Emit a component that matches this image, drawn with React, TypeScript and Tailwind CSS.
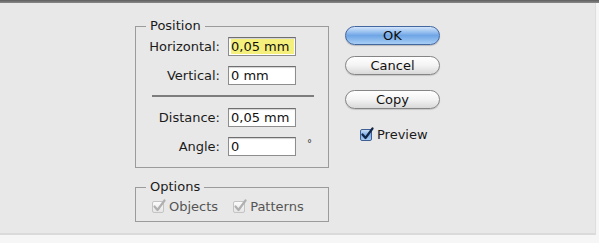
const font = { fontFamily: '"DejaVu Sans", "Liberation Sans", sans-serif' }

function Field({ label, value, highlight = false, suffix }: { label: string; value: string; highlight?: boolean; suffix?: string }) {
  return (
    <div className="flex items-center h-[19px]">
      <div className="w-[85px] text-right pr-[1px] text-[13px] text-[#1b1b1b]">{label}</div>
      <div className="ml-[7px] w-[68px] h-[19px] bg-white border border-[#8d8d8d] border-t-[#6f6f6f] shadow-[inset_0_1px_1px_rgba(0,0,0,0.18)] flex items-center pl-[2px]">
        <span className={highlight ? "bg-[#f5f07c] h-[15px] leading-[15px] pr-[5px] text-[13px] text-[#111]" : "text-[13px] leading-[15px] text-[#111]"}>
          {value}
        </span>
      </div>
      {suffix && <span className="ml-[11px] -mt-[6px] text-[10px] text-[#333]">{suffix}</span>}
    </div>
  )
}

function Check({ disabled = false }: { disabled?: boolean }) {
  return (
    <span
      className={
        disabled
          ? "relative w-[12px] h-[12px] border border-[#c4c4c4] bg-gradient-to-b from-[#fbfbfb] to-[#e6e6e6] rounded-[2px]"
          : "relative w-[12px] h-[12px] border border-[#3d5f94] bg-gradient-to-b from-[#c9dcf4] via-[#7eaee6] to-[#a9cbf2] rounded-[2px]"
      }
    >
      <svg viewBox="0 0 14 14" className="absolute -left-[1px] -top-[3px] w-[14px] h-[14px]">
        <path
          d="M2.5 7.5 L5.5 11 L12.5 1.5"
          fill="none"
          stroke={disabled ? "#b0b0b0" : "#12264a"}
          strokeWidth="2.2"
          strokeLinecap="round"
          strokeLinejoin="round"
        />
      </svg>
    </span>
  )
}

function AquaButton({ label, primary = false }: { label: string; primary?: boolean }) {
  return (
    <div
      className={
        primary
          ? "w-[95px] h-[19px] rounded-full border border-[#42669f] bg-gradient-to-b from-[#d3e5fa] via-[#6fa6e6] to-[#a7cdf5] flex items-center justify-center text-[13px] text-[#0d0d0d] shadow-[0_1px_1px_rgba(0,0,0,0.2)]"
          : "w-[95px] h-[19px] rounded-full border border-[#858585] bg-gradient-to-b from-[#ffffff] via-[#f3f3f3] to-[#d9d9d9] flex items-center justify-center text-[13px] text-[#111] shadow-[0_1px_1px_rgba(0,0,0,0.15)]"
      }
    >
      {label}
    </div>
  )
}

export default function App() {
  return (
    <div className="w-[599px] h-[243px] bg-[#f6f6f6] flex flex-col" style={font}>
      <div className="h-[3px] bg-gradient-to-b from-[#5e5e5e] to-[#8a8a8a]" />
      <div className="w-[596px] h-[232px] bg-[#e8e8e8] border-b-2 border-b-[#dadada] border-r border-r-[#dedede] flex pt-[15px] pl-[135px]">
        <div className="flex flex-col w-[194px]">
          <fieldset className="border border-[#9b9b9b] h-[150px] pb-[10px]">
            <legend className="ml-[10px] px-[4px] text-[13px] leading-[16px] text-[#1b1b1b]">Position</legend>
            <div className="flex flex-col pt-[3px]">
              <Field label="Horizontal:" value="0,05 mm" highlight />
              <div className="h-[10px]" />
              <Field label="Vertical:" value="0 mm" />
              <div className="mt-[10px] ml-[16px] mr-[14px] h-[2px] bg-[#7d7d7d]" />
              <div className="h-[11px]" />
              <Field label="Distance:" value="0,05 mm" />
              <div className="h-[10px]" />
              <Field label="Angle:" value="0" suffix="°" />
            </div>
          </fieldset>
          <fieldset className="mt-[11px] border border-[#9b9b9b] h-[43px]">
            <legend className="ml-[10px] px-[4px] text-[13px] leading-[16px] text-[#1b1b1b]">Options</legend>
            <div className="flex items-center pt-[2px] pl-[16px] text-[13px] text-[#555]">
              <Check disabled />
              <span className="ml-[5px]">Objects</span>
              <span className="ml-[15px] flex items-center">
                <Check disabled />
              </span>
              <span className="ml-[5px]">Patterns</span>
            </div>
          </fieldset>
        </div>
        <div className="ml-[16px] pt-[8px] flex flex-col">
          <AquaButton label="OK" primary />
          <div className="h-[11px]" />
          <AquaButton label="Cancel" />
          <div className="h-[15px]" />
          <AquaButton label="Copy" />
          <div className="mt-[16px] ml-[15px] flex items-center">
            <Check />
            <span className="ml-[5px] text-[13px] text-[#1b1b1b]">Preview</span>
          </div>
        </div>
      </div>
    </div>
  )
}
